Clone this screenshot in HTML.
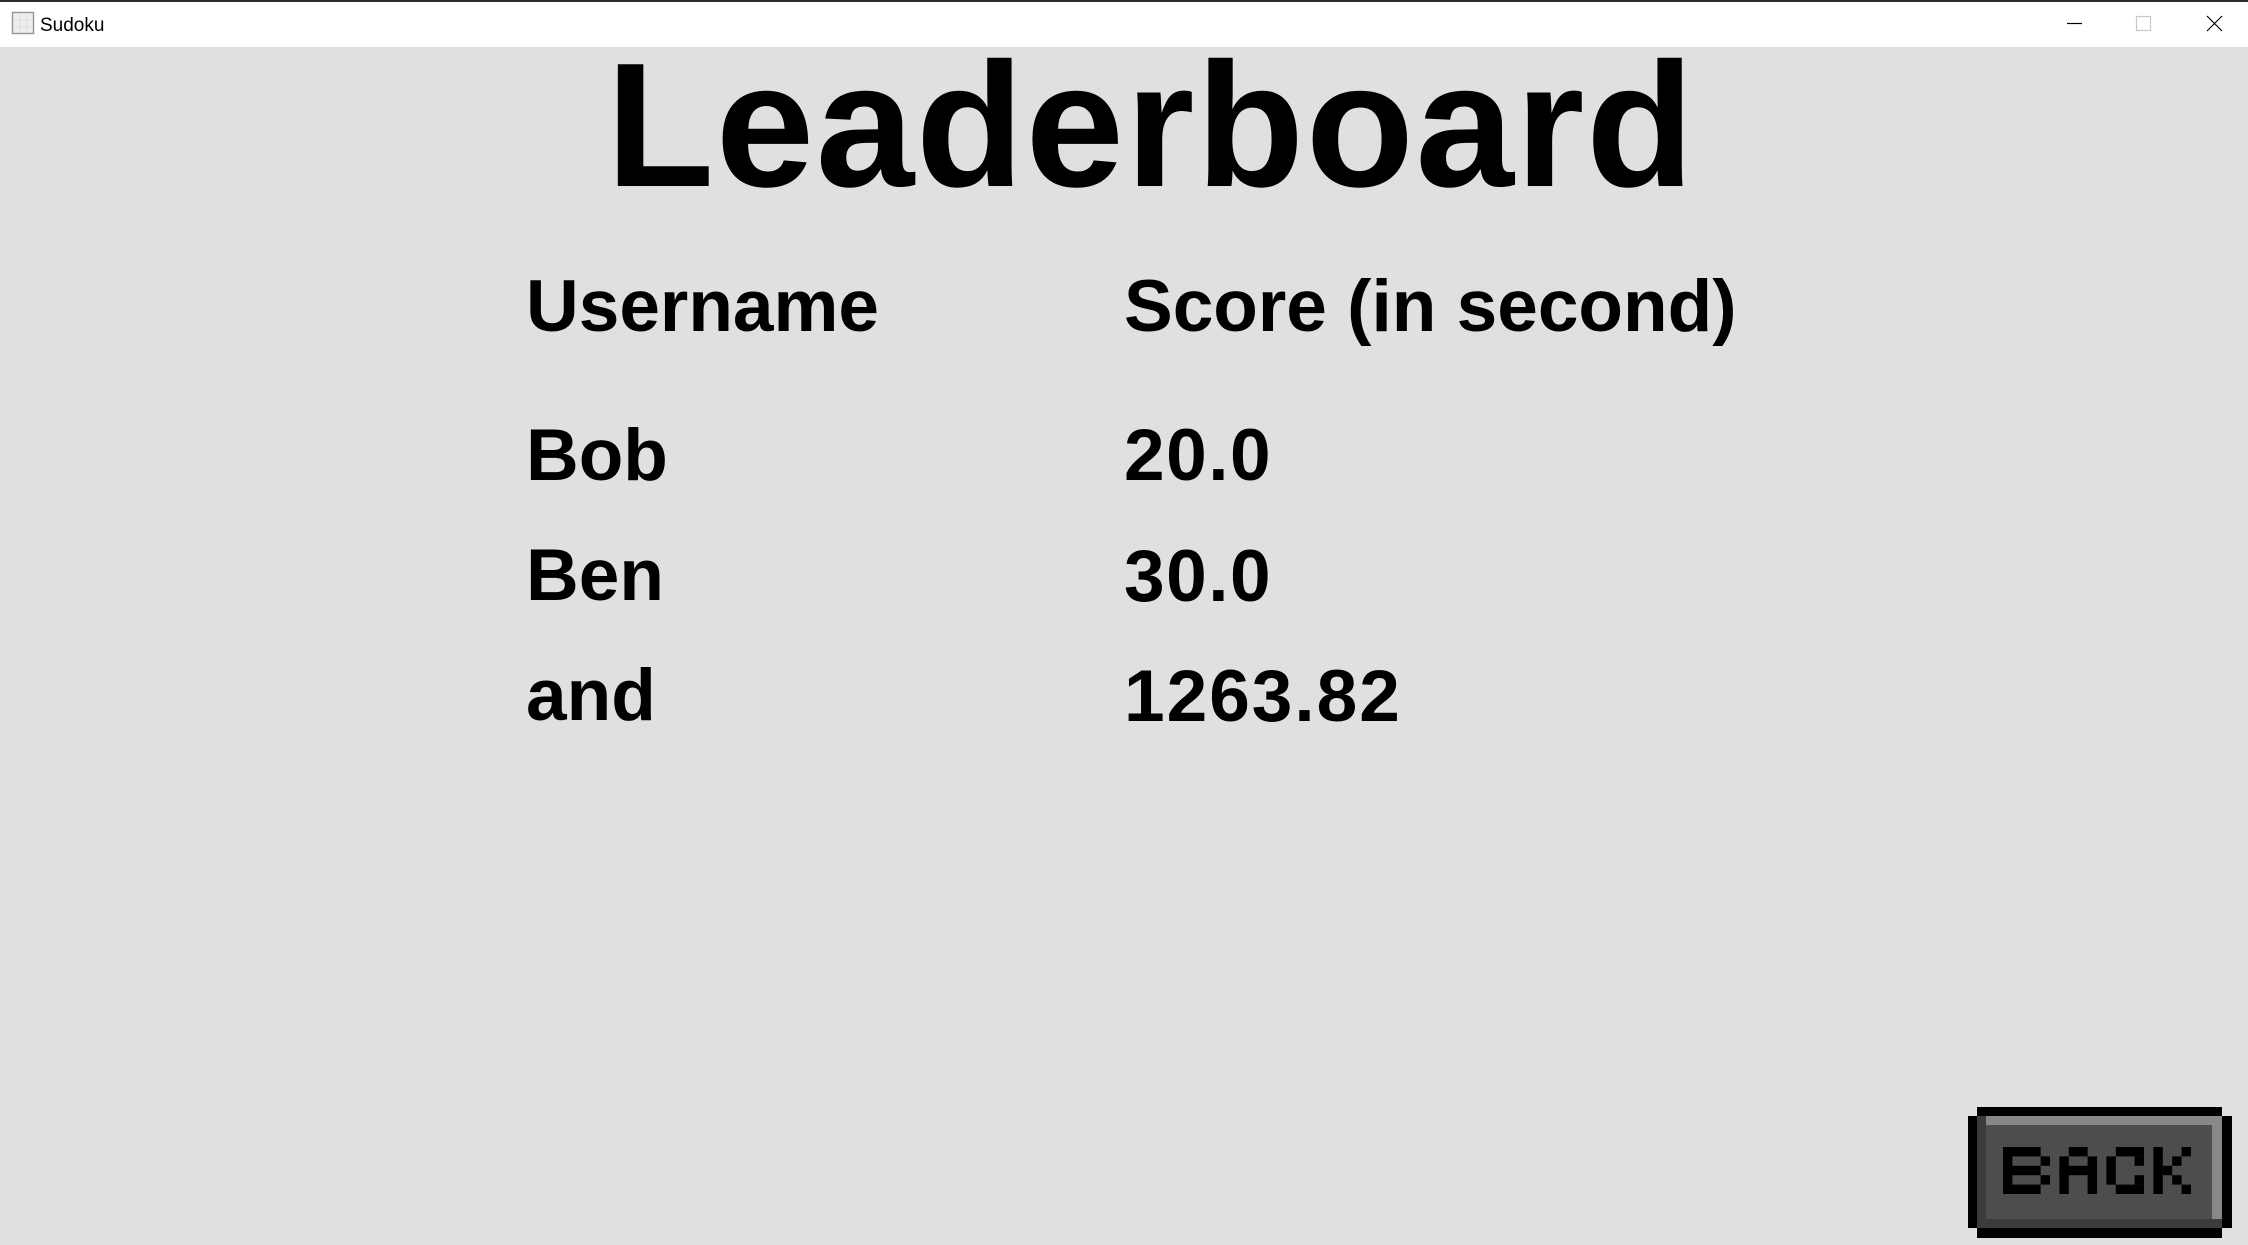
<!DOCTYPE html>
<html><head><meta charset="utf-8"><style>
html,body{margin:0;padding:0;background:#e0e0e0;width:2248px;height:1245px;overflow:hidden}
svg{display:block}
</style></head><body>
<svg width="2248" height="1245" viewBox="0 0 2248 1245" xmlns="http://www.w3.org/2000/svg">
<rect x="0" y="0" width="2248" height="1245" fill="#e0e0e0"/>
<rect x="0" y="0" width="2248" height="47" fill="#ffffff"/>
<rect x="0" y="0" width="2248" height="2" fill="#2a2a2a"/>
<rect x="12.5" y="12.5" width="21" height="21" fill="#efefef" stroke="#999" stroke-width="1.5"/>
<line x1="20" y1="13" x2="20" y2="33" stroke="#ddd"/><line x1="27" y1="13" x2="27" y2="33" stroke="#ddd"/>
<line x1="13" y1="20" x2="33" y2="20" stroke="#ddd"/><line x1="13" y1="27" x2="33" y2="27" stroke="#ddd"/>
<text x="40" y="31" font-family="Liberation Sans, sans-serif" font-size="19" fill="#000">Sudoku</text>
<line x1="2067" y1="23.5" x2="2082" y2="23.5" stroke="#000" stroke-width="1.2"/>
<rect x="2136.5" y="16.5" width="14" height="14" fill="none" stroke="#c8c8c8" stroke-width="1.2"/>
<path d="M2207 16 L2222 31 M2222 16 L2207 31" stroke="#000" stroke-width="1.2"/>
<g font-family="Liberation Sans, Arial, sans-serif" font-weight="bold" fill="#000">
<text x="606" y="186" font-size="177" letter-spacing="1.6">Leaderboard</text>
<text x="526" y="331" font-size="73">Username</text>
<text x="1124" y="331" font-size="73">Score (in second)</text>
<text x="526" y="480" font-size="73">Bob</text>
<text x="1124" y="480" font-size="73" letter-spacing="1.5">20.0</text>
<text x="526" y="600" font-size="73">Ben</text>
<text x="1124" y="601" font-size="73" letter-spacing="1.5">30.0</text>
<text x="526" y="720" font-size="73">and</text>
<text x="1124" y="721" font-size="73" letter-spacing="2">1263.82</text>
</g>
<rect x="1977" y="1107" width="245" height="131" fill="#000"/>
<rect x="1968" y="1116" width="264" height="112" fill="#000"/>
<rect x="1977" y="1116" width="245" height="112" fill="#3c3c3c"/>
<rect x="1986" y="1116" width="236" height="103" fill="#888"/>
<rect x="1986" y="1125" width="226" height="94" fill="#4d4d4d"/>
<g fill="#000" transform="translate(2003,1147) scale(9.4)">
<rect x="0" y="0" width="4" height="1"/><rect x="0" y="0" width="1" height="5"/>
<rect x="4" y="1" width="1" height="1"/><rect x="0" y="2" width="4" height="1"/>
<rect x="4" y="3" width="1" height="1"/><rect x="0" y="4" width="4" height="1"/>
<rect x="7" y="0" width="2" height="1"/><rect x="6" y="1" width="1" height="4"/>
<rect x="9" y="1" width="1" height="4"/><rect x="6" y="2" width="4" height="1"/>
<rect x="12" y="0" width="3" height="1"/><rect x="11" y="1" width="1" height="3"/>
<rect x="12" y="4" width="3" height="1"/><rect x="14" y="1" width="1" height="1"/><rect x="14" y="3" width="1" height="1"/>
<rect x="16" y="0" width="1" height="5"/><rect x="17" y="2" width="1" height="1"/>
<rect x="18" y="1" width="1" height="1"/><rect x="18" y="3" width="1" height="1"/>
<rect x="19" y="0" width="1" height="1"/><rect x="19" y="4" width="1" height="1"/>
</g>
</svg>
</body></html>
